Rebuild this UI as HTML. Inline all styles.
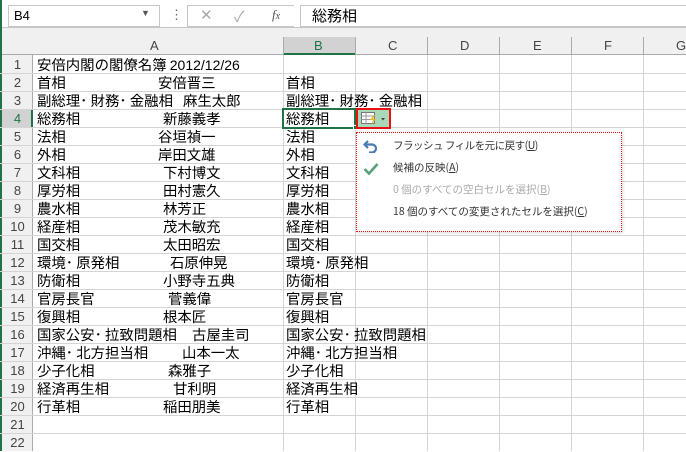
<!DOCTYPE html><html><head><meta charset="utf-8"><style>
*{margin:0;padding:0;box-sizing:border-box}
body{width:686px;height:451px;overflow:hidden;background:#fff;position:relative;font-family:"Liberation Sans","Noto Sans CJK JP",sans-serif;font-size:13px;color:#000}
.a{position:absolute;white-space:nowrap}
.hl{position:absolute;left:0;width:686px;height:1px;background:#d4d4d4}
.vl{position:absolute;top:55px;width:1px;height:396px;background:#d4d4d4}
.rn{position:absolute;left:2px;width:31px;text-align:center;color:#444;font-size:13px;line-height:18px}
.t{position:absolute;line-height:18px;white-space:pre;font-size:14.4px;font-family:"Noto Sans CJK JP","Liberation Sans",sans-serif;top:0}
.m{position:absolute;white-space:nowrap;font-size:10.5px;font-family:"Noto Sans CJK JP",sans-serif;color:#333;line-height:16px}
</style></head><body>
<div class="a" style="left:0;top:0;width:686px;height:27px;background:#fff"></div>
<div class="a" style="left:8px;top:5px;width:152px;height:22px;border:1px solid #c6c6c6"></div>
<div class="a" style="left:14px;top:8px;font-size:13px">B4</div>
<div class="a" style="left:141px;top:8px;font-size:9px;color:#555">▼</div>
<div class="a" style="left:170px;top:7px;color:#666;font-size:13px">⋮</div>
<div class="a" style="left:187px;top:5px;width:107px;height:22px;border:1px solid #c6c6c6;border-right:none"></div>
<div class="a" style="left:200px;top:6px;color:#aaa;font-size:15px">✕</div>
<div class="a" style="left:234px;top:6px;color:#aaa;font-size:15px">✓</div>
<div class="a" style="left:272px;top:7px;color:#555;font-style:italic;font-family:'Liberation Serif',serif;font-size:13px">f<span style="font-size:10px">x</span></div>
<div class="a" style="left:300px;top:5px;width:400px;height:22px;border:1px solid #c6c6c6"></div>
<div class="a" style="left:312px;top:6px;font-size:15px;font-family:'Noto Sans CJK JP',sans-serif;line-height:20px">総務相</div>
<div class="a" style="left:2px;top:27px;width:684px;height:28px;background:#f0f0f0;border-top:1px solid #c6c6c6;border-bottom:1px solid #ababab"></div>
<div class="a" style="left:283px;top:37px;width:72px;height:18px;background:#d2d2d2;border-bottom:2px solid #217346"></div>
<div class="a" style="left:2px;top:55px;width:31px;height:396px;background:#f0f0f0;border-right:1px solid #ababab"></div>
<div class="a" style="left:2px;top:109px;width:31px;height:18px;background:#d2d2d2;border-right:2px solid #217346"></div>
<div class="a" style="left:0;top:0;width:2px;height:451px;background:#217346"></div>
<div class="a" style="left:150px;top:38px;color:#444">A</div>
<div class="a" style="left:314px;top:38px;color:#217346">B</div>
<div class="a" style="left:388px;top:38px;color:#444">C</div>
<div class="a" style="left:460px;top:38px;color:#444">D</div>
<div class="a" style="left:533px;top:38px;color:#444">E</div>
<div class="a" style="left:604px;top:38px;color:#444">F</div>
<div class="a" style="left:676px;top:38px;color:#444">G</div>
<div class="a" style="left:283px;top:37px;width:1px;height:18px;background:#ababab"></div>
<div class="a" style="left:355px;top:37px;width:1px;height:18px;background:#ababab"></div>
<div class="a" style="left:427px;top:37px;width:1px;height:18px;background:#ababab"></div>
<div class="a" style="left:499px;top:37px;width:1px;height:18px;background:#ababab"></div>
<div class="a" style="left:571px;top:37px;width:1px;height:18px;background:#ababab"></div>
<div class="a" style="left:643px;top:37px;width:1px;height:18px;background:#ababab"></div>
<div class="vl" style="left:283px"></div><div class="vl" style="left:355px"></div><div class="vl" style="left:427px"></div><div class="vl" style="left:499px"></div><div class="vl" style="left:571px"></div><div class="vl" style="left:643px"></div>
<div class="hl" style="top:73px"></div><div class="hl" style="top:91px"></div><div class="hl" style="top:109px"></div><div class="hl" style="top:127px"></div><div class="hl" style="top:145px"></div><div class="hl" style="top:163px"></div><div class="hl" style="top:181px"></div><div class="hl" style="top:199px"></div><div class="hl" style="top:217px"></div><div class="hl" style="top:235px"></div><div class="hl" style="top:253px"></div><div class="hl" style="top:271px"></div><div class="hl" style="top:289px"></div><div class="hl" style="top:307px"></div><div class="hl" style="top:325px"></div><div class="hl" style="top:343px"></div><div class="hl" style="top:361px"></div><div class="hl" style="top:379px"></div><div class="hl" style="top:397px"></div><div class="hl" style="top:415px"></div><div class="hl" style="top:433px"></div>
<div class="rn" style="top:56px">1</div><div class="rn" style="top:74px">2</div><div class="rn" style="top:92px">3</div><div class="rn" style="top:110px;color:#217346">4</div><div class="rn" style="top:128px">5</div><div class="rn" style="top:146px">6</div><div class="rn" style="top:164px">7</div><div class="rn" style="top:182px">8</div><div class="rn" style="top:200px">9</div><div class="rn" style="top:218px">10</div><div class="rn" style="top:236px">11</div><div class="rn" style="top:254px">12</div><div class="rn" style="top:272px">13</div><div class="rn" style="top:290px">14</div><div class="rn" style="top:308px">15</div><div class="rn" style="top:326px">16</div><div class="rn" style="top:344px">17</div><div class="rn" style="top:362px">18</div><div class="rn" style="top:380px">19</div><div class="rn" style="top:398px">20</div><div class="rn" style="top:416px">21</div><div class="rn" style="top:434px">22</div>
<div style="position:absolute;left:0;top:56px">
<div class="t" style="left:37px;">安倍内閣の閣僚名簿 <span style="font-family:'Liberation Sans';font-size:14px">2012/12/26</span></div>
</div>
<div style="position:absolute;left:0;top:74px"><div class="t" style="left:37px">首相</div><div class="t" style="left:158px">安倍晋三</div><div class="t" style="left:286px">首相</div></div>
<div style="position:absolute;left:0;top:92px"><div class="t" style="left:37px">副総理･ 財務･ 金融相</div><div class="t" style="left:183px">麻生太郎</div><div class="t" style="left:286px">副総理･ 財務･ 金融相</div></div>
<div style="position:absolute;left:0;top:110px"><div class="t" style="left:37px">総務相</div><div class="t" style="left:163px">新藤義孝</div><div class="t" style="left:286px">総務相</div></div>
<div style="position:absolute;left:0;top:128px"><div class="t" style="left:37px">法相</div><div class="t" style="left:158px">谷垣禎一</div><div class="t" style="left:286px">法相</div></div>
<div style="position:absolute;left:0;top:146px"><div class="t" style="left:37px">外相</div><div class="t" style="left:158px">岸田文雄</div><div class="t" style="left:286px">外相</div></div>
<div style="position:absolute;left:0;top:164px"><div class="t" style="left:37px">文科相</div><div class="t" style="left:163px">下村博文</div><div class="t" style="left:286px">文科相</div></div>
<div style="position:absolute;left:0;top:182px"><div class="t" style="left:37px">厚労相</div><div class="t" style="left:163px">田村憲久</div><div class="t" style="left:286px">厚労相</div></div>
<div style="position:absolute;left:0;top:200px"><div class="t" style="left:37px">農水相</div><div class="t" style="left:163px">林芳正</div><div class="t" style="left:286px">農水相</div></div>
<div style="position:absolute;left:0;top:218px"><div class="t" style="left:37px">経産相</div><div class="t" style="left:163px">茂木敏充</div><div class="t" style="left:286px">経産相</div></div>
<div style="position:absolute;left:0;top:236px"><div class="t" style="left:37px">国交相</div><div class="t" style="left:163px">太田昭宏</div><div class="t" style="left:286px">国交相</div></div>
<div style="position:absolute;left:0;top:254px"><div class="t" style="left:37px">環境･ 原発相</div><div class="t" style="left:170px">石原伸晃</div><div class="t" style="left:286px">環境･ 原発相</div></div>
<div style="position:absolute;left:0;top:272px"><div class="t" style="left:37px">防衛相</div><div class="t" style="left:163px">小野寺五典</div><div class="t" style="left:286px">防衛相</div></div>
<div style="position:absolute;left:0;top:290px"><div class="t" style="left:37px">官房長官</div><div class="t" style="left:168px">菅義偉</div><div class="t" style="left:286px">官房長官</div></div>
<div style="position:absolute;left:0;top:308px"><div class="t" style="left:37px">復興相</div><div class="t" style="left:163px">根本匠</div><div class="t" style="left:286px">復興相</div></div>
<div style="position:absolute;left:0;top:326px"><div class="t" style="left:37px">国家公安･ 拉致問題相</div><div class="t" style="left:192px">古屋圭司</div><div class="t" style="left:286px">国家公安･ 拉致問題相</div></div>
<div style="position:absolute;left:0;top:344px"><div class="t" style="left:37px">沖縄･ 北方担当相</div><div class="t" style="left:182px">山本一太</div><div class="t" style="left:286px">沖縄･ 北方担当相</div></div>
<div style="position:absolute;left:0;top:362px"><div class="t" style="left:37px">少子化相</div><div class="t" style="left:168px">森雅子</div><div class="t" style="left:286px">少子化相</div></div>
<div style="position:absolute;left:0;top:380px"><div class="t" style="left:37px">経済再生相</div><div class="t" style="left:173px">甘利明</div><div class="t" style="left:286px">経済再生相</div></div>
<div style="position:absolute;left:0;top:398px"><div class="t" style="left:37px">行革相</div><div class="t" style="left:163px">稲田朋美</div><div class="t" style="left:286px">行革相</div></div>
<div class="a" style="left:282px;top:108px;width:74px;height:21px;border:2px solid #217346"></div>
<div class="a" style="left:353px;top:125px;width:5px;height:5px;background:#217346;border:1px solid #fff"></div>
<div class="a" style="left:356px;top:108px;width:35px;height:21px;border:2px solid #e81010;background:#a9d8b8"></div>
<svg class="a" style="left:360px;top:111px" width="28" height="15" viewBox="0 0 28 15"><rect x="1.5" y="1.5" width="13" height="11" fill="#fff" stroke="#777"/><line x1="1.5" y1="5" x2="14.5" y2="5" stroke="#999"/><line x1="1.5" y1="8.5" x2="14.5" y2="8.5" stroke="#999"/><line x1="6" y1="1.5" x2="6" y2="12.5" stroke="#999"/><path d="M14 4 L10 9 L13 9 L11 14 L16 8 L13 8 L15 4 Z" fill="#f0b020"/><path d="M21 7 L25 7 L23 9.5 Z" fill="#444"/></svg>
<div class="a" style="left:356px;top:132px;width:266px;height:100px;border:1px dotted #e01010;background:#fff;box-shadow:1px 1px 3px rgba(0,0,0,.15)"></div>
<svg class="a" style="left:363px;top:139px" width="16" height="14" viewBox="0 0 16 14"><path d="M5 2 L1.5 5.5 L5 9" fill="none" stroke="#4a7ab5" stroke-width="2.2"/><path d="M2 5.5 H9 A4 4 0 0 1 9 13.5 H6" fill="none" stroke="#4a7ab5" stroke-width="2.2"/></svg>
<div class="m" style="left:393px;top:138px;letter-spacing:-0.5px">フラッシュ フィルを元に戻す(<u>U</u>)</div>
<svg class="a" style="left:363px;top:162px" width="16" height="14" viewBox="0 0 16 14"><path d="M1.5 7 L6 11.5 L14.5 2" fill="none" stroke="#5a9e7a" stroke-width="2.6"/></svg>
<div class="m" style="left:393px;top:160px">候補の反映(<u>A</u>)</div>
<div class="m" style="left:393px;top:182px;color:#aaa">0 個のすべての空白セルを選択(<u>B</u>)</div>
<div class="m" style="left:393px;top:204px">18 個のすべての変更されたセルを選択(<u>C</u>)</div>
</body></html>
